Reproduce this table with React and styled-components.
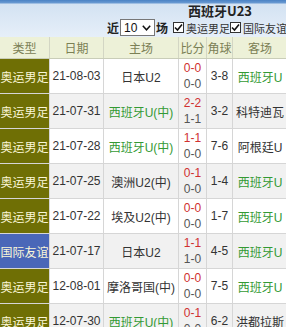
import styled, { createGlobalStyle } from "styled-components";

const GlobalStyle = createGlobalStyle`
  html, body {
    margin: 0;
    padding: 0;
    overflow: hidden;
    background: #fff;
  }
  body {
    font-family: "Liberation Sans", "Noto Sans CJK SC", sans-serif;
    font-size: 12px;
    color: #333;
  }
`;

const matches = [
  { type: "奥运男足", date: "21-08-03", home: "日本U2", score: "0-0", half: "0-0", corner: "3-8", away: "西班牙U", awayUs: true },
  { type: "奥运男足", date: "21-07-31", home: "西班牙U(中)", homeUs: true, score: "2-2", half: "1-1", corner: "3-2", away: "科特迪瓦" },
  { type: "奥运男足", date: "21-07-28", home: "西班牙U(中)", homeUs: true, score: "1-1", half: "0-0", corner: "7-6", away: "阿根廷U" },
  { type: "奥运男足", date: "21-07-25", home: "澳洲U2(中)", score: "0-1", half: "0-0", corner: "1-4", away: "西班牙U", awayUs: true },
  { type: "奥运男足", date: "21-07-22", home: "埃及U2(中)", score: "0-0", half: "0-0", corner: "1-7", away: "西班牙U", awayUs: true },
  { type: "国际友谊", friendly: true, date: "21-07-17", home: "日本U2", score: "1-1", half: "1-0", corner: "4-5", away: "西班牙U", awayUs: true },
  { type: "奥运男足", date: "12-08-01", home: "摩洛哥国(中)", score: "0-0", half: "0-0", corner: "7-5", away: "西班牙U", awayUs: true },
  { type: "奥运男足", date: "12-07-30", home: "西班牙U(中)", homeUs: true, score: "0-1", half: "0-0", corner: "6-2", away: "洪都拉斯" },
];

const columns = "50px 54px 75px 28px 26px 55px";

const Page = styled.div`
  width: 440px;
`;

const TopBar = styled.div`
  height: 37px;
  background: linear-gradient(#4a82c4 0, #6a9ad2 3px, #d3e2f2 4px, #e6eff9 100%);
  display: flex;
  flex-direction: column;
  align-items: center;
`;

const Title = styled.div`
  font-family: "Noto Sans CJK SC", sans-serif;
  font-weight: bold;
  font-size: 13px;
  line-height: 16px;
  margin-top: 3px;
  color: #222;
`;

const FilterRow = styled.div`
  display: flex;
  align-items: center;
  height: 17px;
  font-family: "Noto Sans CJK SC", sans-serif;
`;

const Near = styled.span`
  font-weight: bold;
  font-size: 12px;
  color: #222;
`;

const Select = styled.span`
  display: inline-flex;
  align-items: center;
  justify-content: space-between;
  box-sizing: border-box;
  width: 35px;
  height: 17px;
  margin: 0 1px;
  padding: 0 3px;
  border: 1px solid #777;
  background: #fff;
  font-family: "Liberation Sans", sans-serif;
  font-size: 12px;
  color: #111;
`;

const Check = styled.span`
  display: inline-flex;
  align-items: center;
  margin-left: ${(p) => p.$gap || 0}px;
  font-size: 11px;
  color: #333;
`;

const Box = styled.span`
  display: inline-flex;
  align-items: center;
  justify-content: center;
  box-sizing: border-box;
  width: 11px;
  height: 11px;
  border: 1px solid #333;
  background: #fff;
  margin-right: 2px;
`;

const Table = styled.div`
  width: 288px;
`;

const HeadRow = styled.div`
  display: grid;
  grid-template-columns: ${columns};
  height: 22px;
  background: #edf1d8;
  border-bottom: 1px solid #c9cdb8;
  box-sizing: border-box;
`;

const HeadCell = styled.div`
  display: flex;
  align-items: center;
  justify-content: center;
  border-right: 1px solid #d3d6c4;
  font-family: "Noto Sans CJK SC", sans-serif;
  font-size: 12px;
  color: #7b8055;
`;

const Row = styled.div`
  display: grid;
  grid-template-columns: ${columns};
  height: 35px;
  box-sizing: border-box;
  border-bottom: 1px solid #d6d6d6;
  background: ${(p) => (p.$alt ? "#f1f1f1" : "#fff")};
`;

const Cell = styled.div`
  display: flex;
  flex-direction: column;
  align-items: center;
  justify-content: center;
  border-right: 1px solid #d6d6d6;
  font-family: "Liberation Sans", "Noto Sans CJK SC", sans-serif;
  font-size: 12px;
  white-space: nowrap;
  overflow: hidden;
  color: ${(p) => (p.$us ? "#349a34" : "#333")};
`;

const TypeCell = styled(Cell)`
  background: ${(p) => (p.$friendly ? "#4a67b8" : "#6f6f05")};
  color: #fbf7d8;
  font-family: "Noto Sans CJK SC", sans-serif;
`;

const Score = styled.span`
  line-height: 16px;
  color: ${(p) => (p.$full ? "#d03030" : "#555")};
`;

const CheckMark = () => (
  <svg width="9" height="9" viewBox="0 0 9 9">
    <path d="M1 4.5 L3.5 7 L8 1.5" fill="none" stroke="#111" strokeWidth="1.6" />
  </svg>
);

const Chevron = () => (
  <svg width="9" height="6" viewBox="0 0 9 6">
    <path d="M0.8 0.8 L4.5 4.8 L8.2 0.8" fill="none" stroke="#111" strokeWidth="1.5" />
  </svg>
);

export default function App() {
  return (
    <>
      <GlobalStyle />
      <Page>
        <TopBar>
          <Title>西班牙U23</Title>
          <FilterRow>
            <Near>近</Near>
            <Select>
              10 <Chevron />
            </Select>
            <Near>场</Near>
            <Check $gap={5}>
              <Box><CheckMark /></Box>奥运男足
            </Check>
            <Check>
              <Box><CheckMark /></Box>国际友谊
            </Check>
            <Check>
              <Box><CheckMark /></Box>其他赛
            </Check>
          </FilterRow>
        </TopBar>
        <Table>
          <HeadRow>
            <HeadCell>类型</HeadCell>
            <HeadCell>日期</HeadCell>
            <HeadCell>主场</HeadCell>
            <HeadCell>比分</HeadCell>
            <HeadCell>角球</HeadCell>
            <HeadCell>客场</HeadCell>
          </HeadRow>
          {matches.map((m, i) => (
            <Row key={i} $alt={i % 2 === 1}>
              <TypeCell $friendly={m.friendly}>{m.type}</TypeCell>
              <Cell>{m.date}</Cell>
              <Cell $us={m.homeUs}>{m.home}</Cell>
              <Cell>
                <Score $full>{m.score}</Score>
                <Score>{m.half}</Score>
              </Cell>
              <Cell>{m.corner}</Cell>
              <Cell $us={m.awayUs}>{m.away}</Cell>
            </Row>
          ))}
        </Table>
      </Page>
    </>
  );
}
